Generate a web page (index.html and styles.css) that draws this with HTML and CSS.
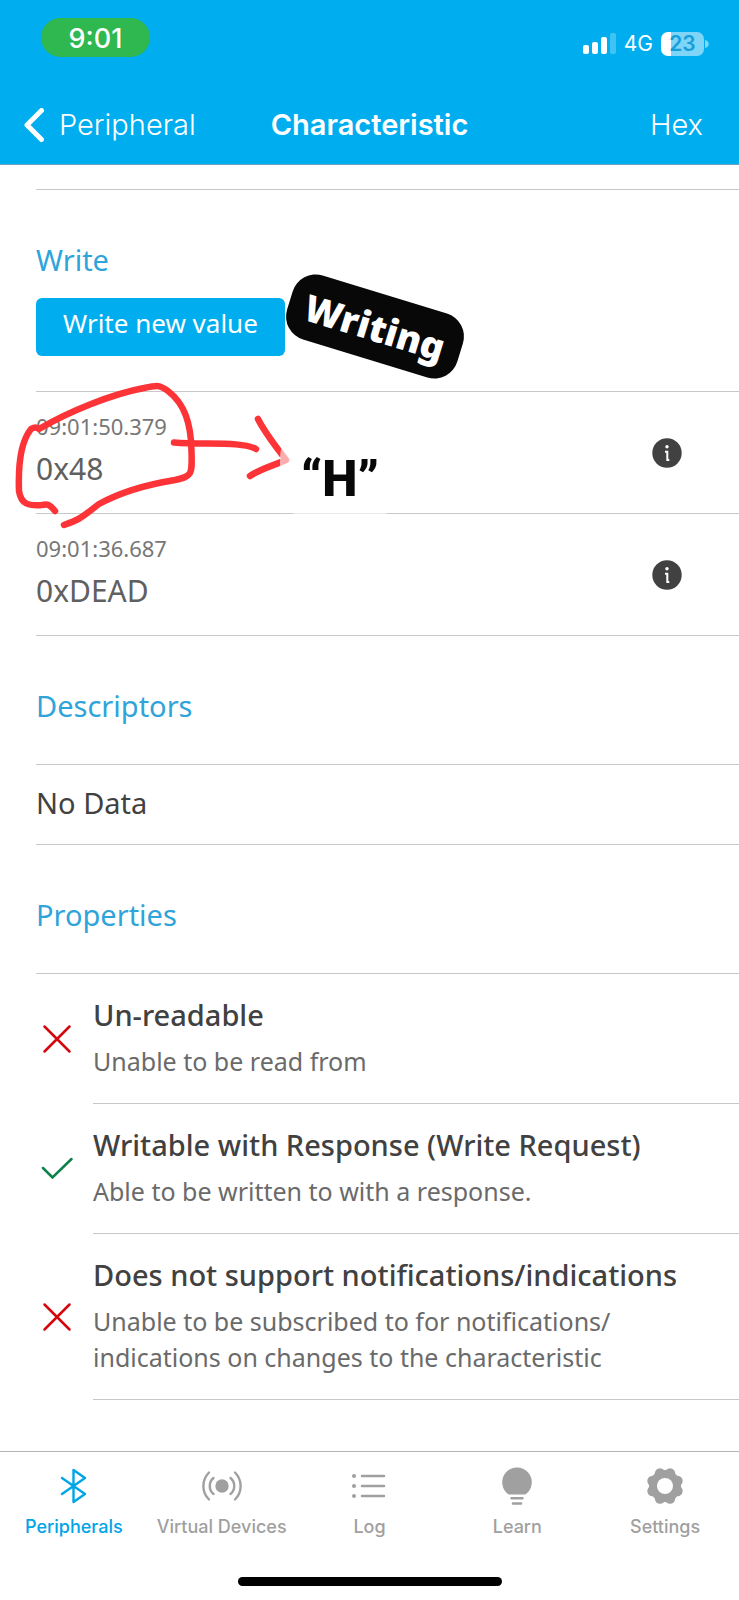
FILE: index.html
```html
<!DOCTYPE html>
<html lang="en">
<head>
<meta charset="utf-8">
<meta name="viewport" content="width=device-width, initial-scale=1">
<title>Characteristic</title>
<link rel="stylesheet" href="styles.css">
</head>
<body>
<div class="app">
  <header class="header">
    <div class="status">
      <span class="clock">9:01</span>
      <div class="status-right">
        <svg class="signal" width="34" height="22" viewBox="0 0 34 22" fill="#fff" aria-hidden="true">
          <rect x="0" y="12" width="6" height="9" rx="2"/><rect x="9" y="9" width="6" height="12" rx="2"/><rect x="18" y="4" width="6" height="17" rx="2"/><rect x="27" y="0" width="6" height="21" rx="2" opacity=".25"/>
        </svg>
        <span class="network">4G</span>
        <span class="battery">23</span>
        <svg class="battery-tip" width="4" height="10" viewBox="0 0 4 10" aria-hidden="true"><path d="M0 1C5 2 5 8 0 9Z" fill="#7fd5f7"/></svg>
      </div>
    </div>
    <nav class="nav">
      <a class="back" href="#peripheral">
        <svg width="20" height="34" viewBox="0 0 20 34" fill="none" stroke="#fff" stroke-width="5" stroke-linecap="round" stroke-linejoin="round" aria-hidden="true"><path d="M17.500 2.500 3 17l14.500 14.500"/></svg>
        Peripheral
      </a>
      <h1 class="title">Characteristic</h1>
      <button class="hex" type="button">Hex</button>
    </nav>
  </header>

  <main class="content">
    <div class="previous"></div>
    <section class="section-head write">
      <h2>Write</h2>
      <button class="primary" type="button">Write new value</button>
      <span class="sticker">Writing</span>
    </section>
    <div class="value-row">
      <div><div class="time">09:01:50.379</div><div class="value">0x48</div></div>
      <button class="info" type="button" aria-label="Details for 0x48">
        <svg width="30" height="30" viewBox="0 0 30 30" aria-hidden="true"><circle cx="15" cy="15" r="14.700" fill="#414141"/><circle cx="15" cy="8.800" r="1.700" fill="#fff"/><path d="M13 13.700h2.300V22h2" fill="none" stroke="#fff" stroke-width="2"/></svg>
      </button>
      <svg class="scribble" width="300" height="150" viewBox="0 380 300 150" fill="none" stroke="#fd3437" stroke-width="6.500" stroke-linecap="round" stroke-linejoin="round" aria-hidden="true">
        <path d="M55 510C49 503 48 503 42 504C28 505 21 503 19 490C18 462 22 439 31 428Q36 425 39 428C70 410 112 393 144 387C158 384 160 384 168 390C185 403 191 423 191.500 450C192 473 193 475 175 479C144 484 121 491 99 503C83 515 83 517 64 524"/>
        <path d="M174 441.500C206 444 241 440 256 448M258 418C265 432 274 443 286 459C275 464 260 468 250 475"/>
      </svg>
      <span class="hand-label">“H”</span>
    </div>
    <div class="value-row">
      <div><div class="time">09:01:36.687</div><div class="value">0xDEAD</div></div>
      <button class="info" type="button" aria-label="Details for 0xDEAD">
        <svg width="30" height="30" viewBox="0 0 30 30" aria-hidden="true"><circle cx="15" cy="15" r="14.700" fill="#414141"/><circle cx="15" cy="8.800" r="1.700" fill="#fff"/><path d="M13 13.700h2.300V22h2" fill="none" stroke="#fff" stroke-width="2"/></svg>
      </button>
    </div>
    <section class="section-head"><h2>Descriptors</h2></section>
    <p class="empty">No Data</p>
    <section class="section-head"><h2>Properties</h2></section>
    <ul class="properties">
      <li>
        <svg class="mark" width="30" height="30" viewBox="0 0 30 30" fill="none" stroke="#d3070d" stroke-width="2.500" stroke-linecap="round" aria-hidden="true"><path d="m2.500 2.500 25 25M27.500 2.500l-25 25"/></svg>
        <div class="property"><h3>Un-readable</h3><p>Unable to be read from</p></div>
      </li>
      <li>
        <svg class="mark" width="32" height="30" viewBox="0 0 32 30" fill="none" stroke="#0c8149" stroke-width="2.500" stroke-linecap="round" aria-hidden="true"><path d="m2 14 9.500 9.500L30.500 5"/></svg>
        <div class="property"><h3>Writable with Response (Write Request)</h3><p>Able to be written to with a response.</p></div>
      </li>
      <li>
        <svg class="mark" width="30" height="30" viewBox="0 0 30 30" fill="none" stroke="#d3070d" stroke-width="2.500" stroke-linecap="round" aria-hidden="true"><path d="m2.500 2.500 25 25M27.500 2.500l-25 25"/></svg>
        <div class="property"><h3>Does not support notifications/indications</h3><p>Unable to be subscribed to for notifications/<wbr>indications on changes to the characteristic</p></div>
      </li>
    </ul>
  </main>

  <footer class="footer">
    <nav class="tabs">
      <a class="tab active" href="#peripherals">
        <svg width="42" height="40" viewBox="0 0 42 40" fill="none" stroke="currentColor" stroke-width="2.400" stroke-linecap="round" stroke-linejoin="round" aria-hidden="true"><path d="m9 12 23 16-11.500 8V4L32 12 9 28"/></svg>
        Peripherals
      </a>
      <a class="tab" href="#virtual">
        <svg width="42" height="40" viewBox="0 0 42 40" fill="none" stroke="currentColor" stroke-width="2.400" stroke-linecap="round" aria-hidden="true"><circle cx="21" cy="20" r="6.700" fill="currentColor" stroke="none"/><path d="M12.500 12C7.500 16 7.500 24 12.500 28M29.500 12C34.500 16 34.500 24 29.500 28M8 6.500C.5 14 .5 26 8 33.500M34 6.500C41.500 14 41.500 26 34 33.500"/></svg>
        Virtual Devices
      </a>
      <a class="tab" href="#log">
        <svg width="42" height="40" viewBox="0 0 42 40" fill="none" stroke="currentColor" stroke-width="2.500" stroke-linecap="round" aria-hidden="true"><path d="M14 10h22M14 20h22M14 30h22"/><g fill="currentColor" stroke="none"><circle cx="6" cy="10" r="2"/><circle cx="6" cy="20" r="2"/><circle cx="6" cy="30" r="2"/></g></svg>
        Log
      </a>
      <a class="tab" href="#learn">
        <svg width="42" height="40" viewBox="0 0 42 40" aria-hidden="true"><path d="M12 28A14.800 14.800 0 1 1 30 28C29 28.700 28 28.500 27 28.500H15C14 28.500 13 28.700 12 28Z" fill="currentColor"/><path d="M15.500 32.200h11M17 37.500h8" stroke="currentColor" stroke-width="2.500" stroke-linecap="round"/></svg>
        Learn
      </a>
      <a class="tab" href="#settings">
        <svg width="42" height="40" viewBox="0 0 42 40" aria-hidden="true"><g fill="currentColor"><circle cx="21" cy="20" r="16"/><circle cx="26" cy="7.500" r="5.200"/><circle cx="33.500" cy="15" r="5.200"/><circle cx="33.500" cy="25" r="5.200"/><circle cx="26" cy="32.500" r="5.200"/><circle cx="16" cy="32.500" r="5.200"/><circle cx="8.500" cy="25" r="5.200"/><circle cx="8.500" cy="15" r="5.200"/><circle cx="16" cy="7.500" r="5.200"/></g><circle cx="21" cy="20" r="8" fill="#fff"/></svg>
        Settings
      </a>
    </nav>
    <div class="home"></div>
  </footer>
</div>
</body>
</html>
```

FILE: styles.css
```css
* { box-sizing: border-box; }
body { margin: 0; background: #fff; color: #414141; font-family: "Noto Sans", sans-serif; }
h1, h2, h3, p, ul { margin: 0; padding: 0; font-weight: 400; }
button { border: 0; padding: 0; background: none; font: inherit; color: inherit; cursor: pointer; }
a { color: inherit; text-decoration: none; }
svg { display: block; flex: none; }

.app { min-height: 100vh; display: flex; flex-direction: column; overflow-x: hidden; }

.header { background: #00aeef; color: #fff; font-family: Inter, sans-serif; border-bottom: 1px solid #6aa5bd; }
.status { display: flex; justify-content: space-between; align-items: flex-start; padding: 18px 30px 0 41px; height: 85px; }
.clock { width: 109px; height: 39px; border-radius: 20px; background: #2fb84f; font-size: 27px; font-weight: 500; line-height: 41px; text-align: center; }
.status-right { display: flex; align-items: center; margin-top: 14px; height: 24px; }
.network { margin: 0 8px 0 7px; font-size: 21px; font-weight: 400; line-height: 26px; }
.battery { width: 43px; height: 24px; border-radius: 7px; background: linear-gradient(90deg, #fff 10px, #7fd5f7 10px); color: #169fda; font-size: 21px; font-weight: 600; line-height: 24px; text-align: center; }
.battery-tip { margin-left: 1px; }
.nav { display: grid; grid-template-columns: 1fr auto 1fr; align-items: center; height: 79px; padding: 0 24px; font-size: 29px; font-weight: 300; line-height: 40px; }
.back { display: flex; align-items: center; gap: 15px; }
.title { font-size: 29px; font-weight: 600; }
.hex { justify-self: end; margin-right: 12px; }

.content { padding-left: 36px; }
.previous { height: 25px; border-bottom: 1px solid #c8c8c8; }
.section-head { position: relative; padding: 50px 0 38px; border-bottom: 1px solid #c8c8c8; }
.section-head h2 { color: #2fa4da; font-size: 29px; line-height: 40px; }
.write { padding-bottom: 35px; }
.primary { display: block; margin-top: 18px; padding: 7px 27px 15px; border-radius: 6px; background: #00aeef; color: #fff; font-size: 26px; line-height: 36px; }
.sticker { position: absolute; left: 250px; top: 103px; width: 178px; height: 67px; border-radius: 24px; background: #080808; color: #fff; font-size: 37px; font-weight: 900; line-height: 68px; text-align: center; transform: rotate(17deg); }

.value-row { position: relative; display: flex; align-items: center; justify-content: space-between; padding: 20px 57px 24px 0; border-bottom: 1px solid #c8c8c8; }
.time { color: #777; font-size: 22px; line-height: 28px; }
.value { margin-top: 9px; color: #606060; font-size: 30px; line-height: 40px; }
.info { margin-top: 4px; }
.scribble { position: absolute; left: -36px; top: -11px; }
.hand-label { position: absolute; left: 244px; top: 41px; width: 120px; height: 83px; border-radius: 24px; background: rgb(255 255 255 / 60%); color: #080808; font-family: Roboto, sans-serif; font-size: 50px; font-weight: 900; line-height: 92px; text-align: center; }

.empty { padding: 18px 0 21px; border-bottom: 1px solid #c8c8c8; font-size: 29px; line-height: 40px; }

.properties { list-style: none; }
.properties li { display: grid; grid-template-columns: 42px 1fr; align-items: center; column-gap: 15px; }
.mark { justify-self: center; }
.property { padding: 21px 40px 24px 0; border-bottom: 1px solid #c8c8c8; }
.property h3 { font-size: 29px; font-weight: 500; line-height: 40px; }
.property p { margin-top: 8px; color: #6a6a6a; font-size: 25px; line-height: 36px; }

.footer { margin-top: auto; border-top: 1px solid #b4b4b4; padding-bottom: 14px; }
.tabs { display: grid; grid-template-columns: repeat(5, 1fr); padding: 14px 0 37px; font-family: Inter, sans-serif; }
.tab { display: flex; flex-direction: column; align-items: center; gap: 8px; color: #a0a0a0; font-size: 18px; font-weight: 500; line-height: 26px; white-space: nowrap; }
.active { color: #00a5e8; }
.home { width: 264px; height: 9px; margin: 0 auto; border-radius: 5px; background: #000; }
```
